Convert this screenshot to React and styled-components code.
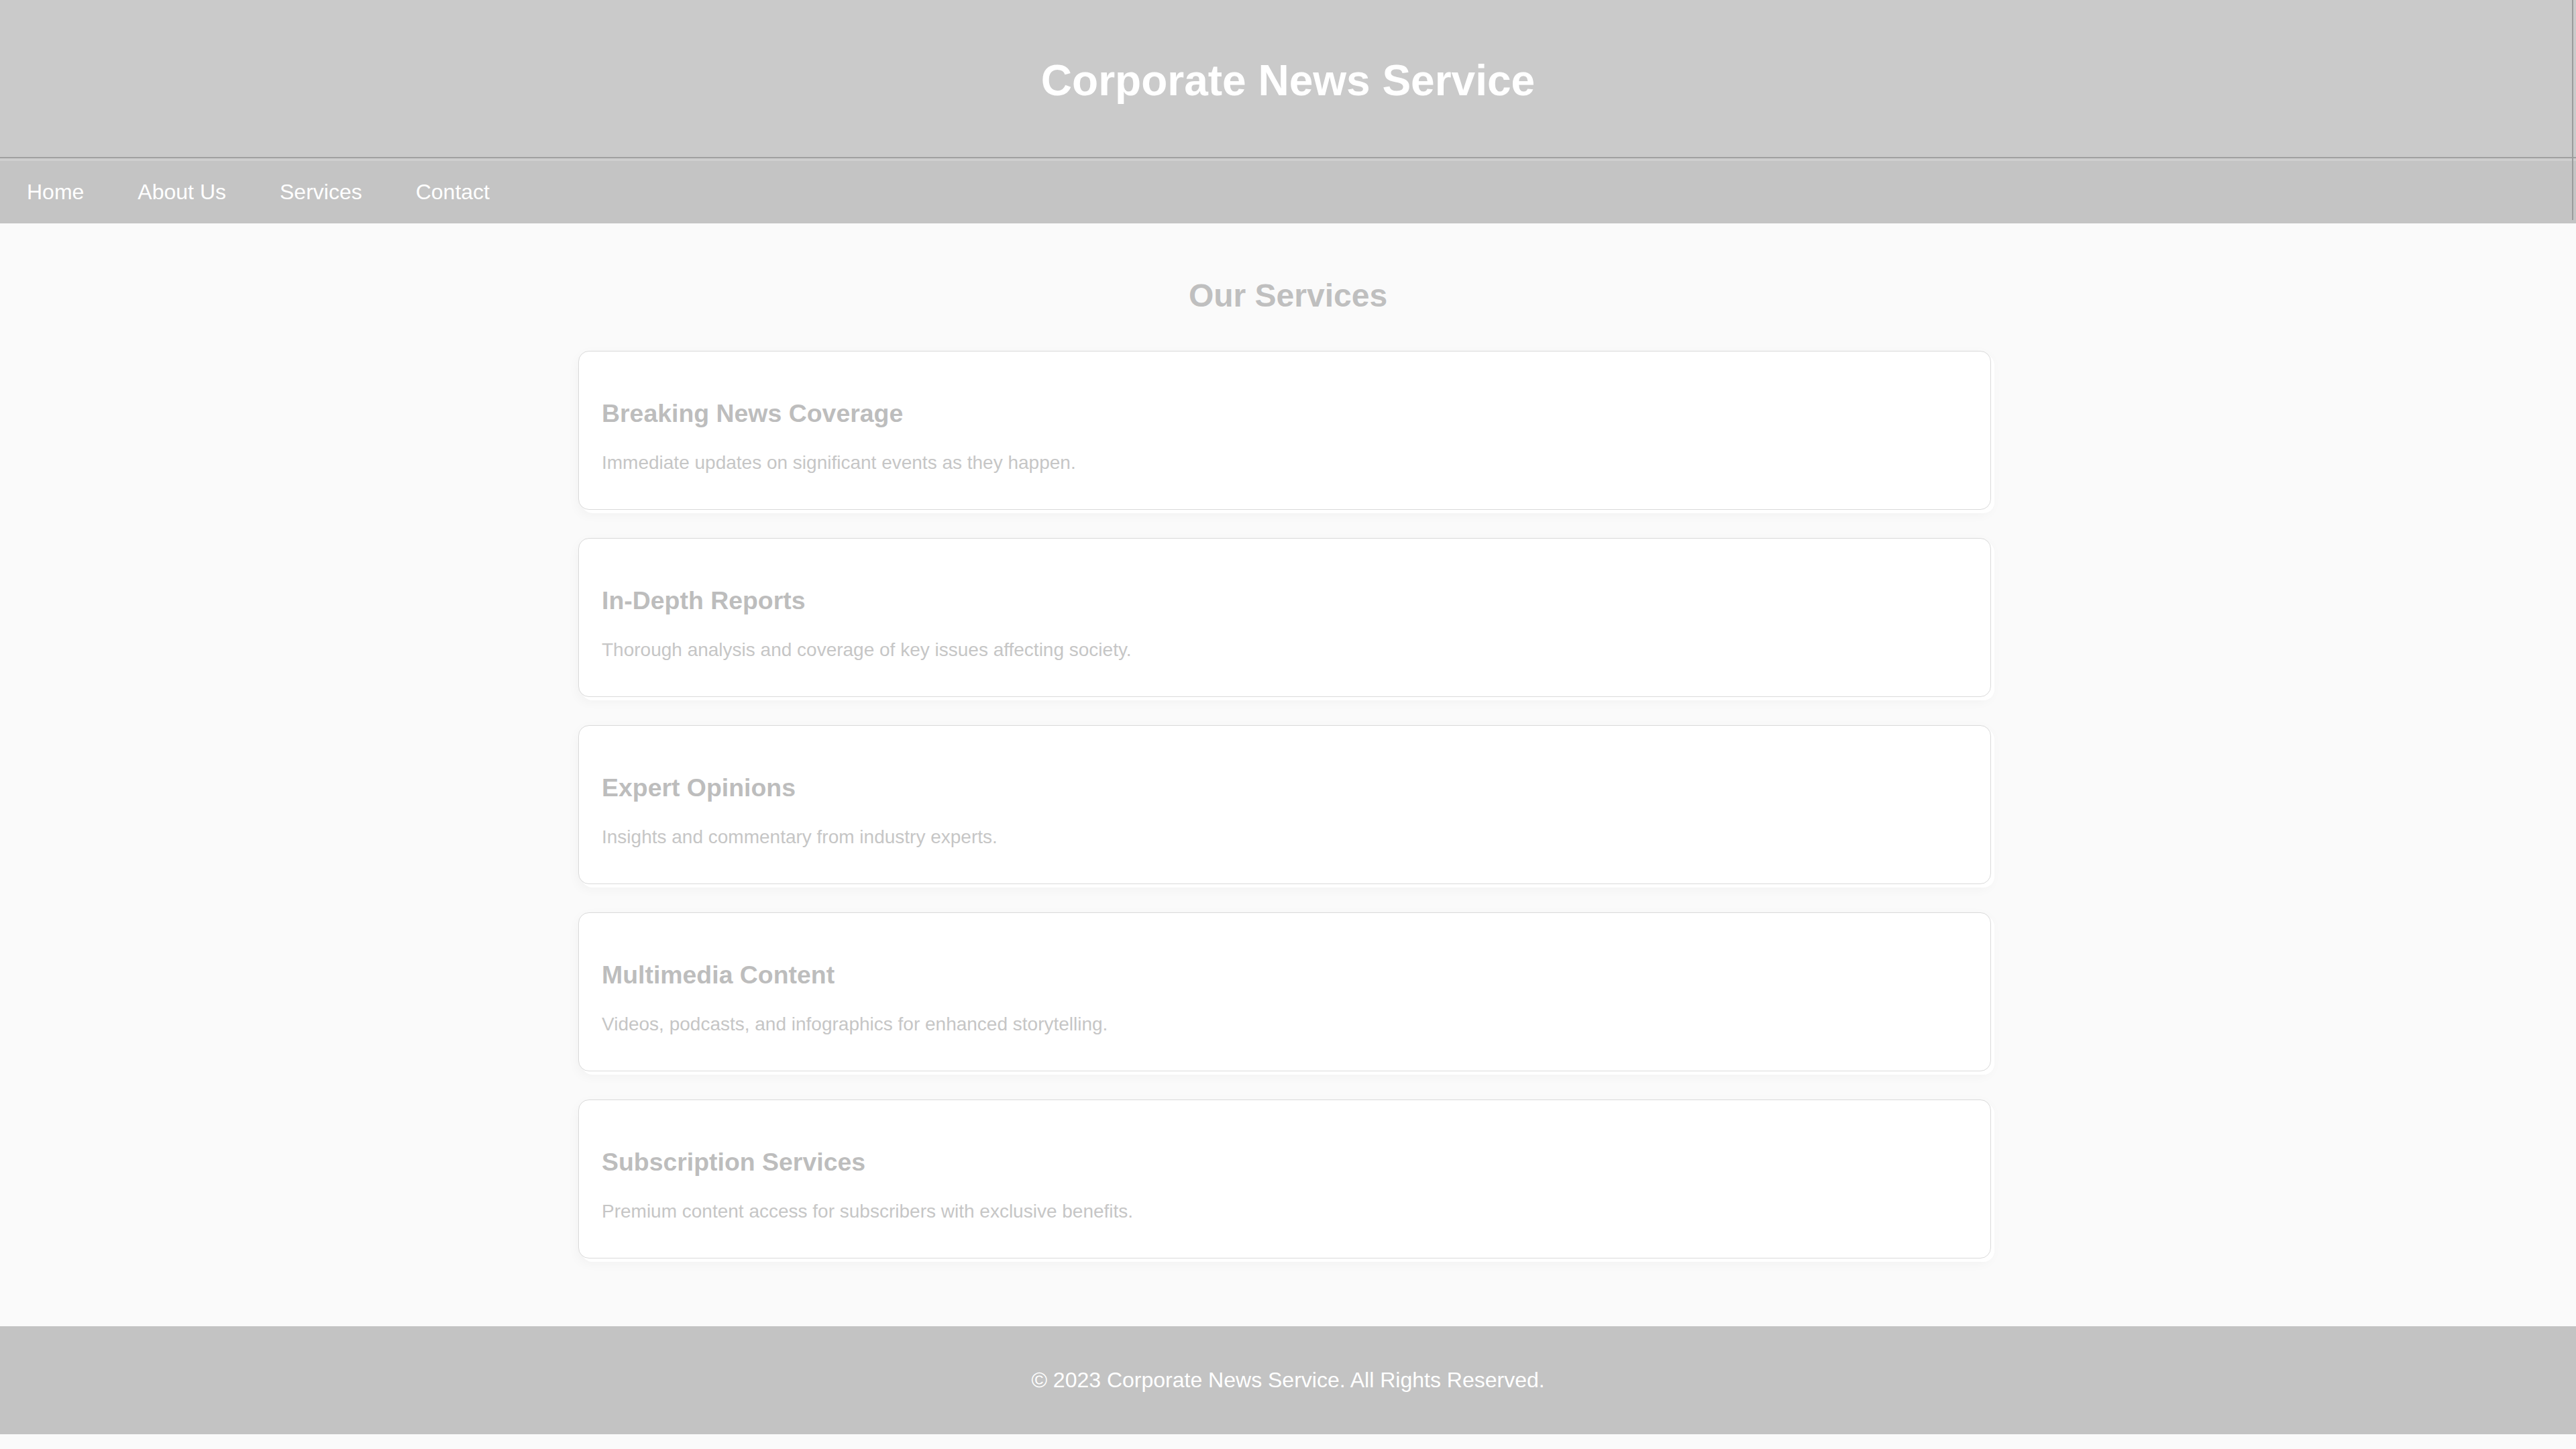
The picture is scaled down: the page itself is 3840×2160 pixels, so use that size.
import React from "react";
import styled, { createGlobalStyle } from "styled-components";

const GlobalStyle = createGlobalStyle`
  html, body {
    margin: 0;
    padding: 0;
    background-color: #fafafa;
    font-family: "Liberation Sans", Arial, sans-serif;
  }
`;

const TopBand = styled.div`
  position: relative;
  /* thin edge line on the right of header + nav */
  &::after {
    content: "";
    position: absolute;
    top: 0;
    right: 4px;
    width: 2px;
    height: 328px;
    background-color: #9c9c9c;
  }
`;

const Header = styled.header`
  background-color: #cacaca;
  padding: 83px 0 77px;
  border-bottom: 2px solid #a0a0a0;
  box-shadow: 0 4px 0 #cecece;
  margin-bottom: 4px;
  text-align: center;
`;

const Title = styled.h1`
  margin: 0;
  font-size: 64px;
  line-height: 74px;
  font-weight: bold;
  color: #fff;
`;

const Nav = styled.nav`
  background-color: #c4c4c4;
  display: flex;
  padding: 28px 0;
`;

const NavLink = styled.a`
  color: #fff;
  font-size: 32px;
  line-height: 37px;
  text-decoration: none;
  padding: 0 40px;
`;

const Main = styled.main`
  padding: 80px 10px 101px 0;
`;

const Heading2 = styled.h2`
  margin: 0 0 55px;
  text-align: center;
  font-size: 48px;
  line-height: 55px;
  color: #bfbfbf;
  padding-left: 10px;
`;

const CardList = styled.div`
  width: 2106px;
  margin: 0 auto;
  display: flex;
  flex-direction: column;
  gap: 42px;
`;

const Card = styled.div`
  background-color: #fff;
  border: 1px solid #dadada;
  border-radius: 16px;
  padding: 69px 34px 53px;
  box-shadow: 5px 5px 0 #fff, 0 6px 18px rgba(0, 0, 0, 0.045);
`;

const CardTitle = styled.h3`
  margin: 0 0 35px;
  font-size: 37.44px;
  line-height: 46px;
  font-weight: bold;
  color: #bdbdbd;
`;

const CardText = styled.p`
  margin: 0;
  font-size: 28px;
  line-height: 32px;
  color: #c6c6c6;
`;

const Footer = styled.footer`
  background-color: #c3c3c3;
  padding: 62px 0;
  text-align: center;
  color: #fff;
  font-size: 32px;
  line-height: 37px;
`;

const services = [
  {
    title: "Breaking News Coverage",
    text: "Immediate updates on significant events as they happen.",
  },
  {
    title: "In-Depth Reports",
    text: "Thorough analysis and coverage of key issues affecting society.",
  },
  {
    title: "Expert Opinions",
    text: "Insights and commentary from industry experts.",
  },
  {
    title: "Multimedia Content",
    text: "Videos, podcasts, and infographics for enhanced storytelling.",
  },
  {
    title: "Subscription Services",
    text: "Premium content access for subscribers with exclusive benefits.",
  },
];

export default function App() {
  return (
    <>
      <GlobalStyle />
      <TopBand>
        <Header>
          <Title>Corporate News Service</Title>
        </Header>
        <Nav>
          <NavLink href="#">Home</NavLink>
          <NavLink href="#">About Us</NavLink>
          <NavLink href="#">Services</NavLink>
          <NavLink href="#">Contact</NavLink>
        </Nav>
      </TopBand>
      <Main>
        <Heading2>Our Services</Heading2>
        <CardList>
          {services.map((s) => (
            <Card key={s.title}>
              <CardTitle>{s.title}</CardTitle>
              <CardText>{s.text}</CardText>
            </Card>
          ))}
        </CardList>
      </Main>
      <Footer>© 2023 Corporate News Service. All Rights Reserved.</Footer>
    </>
  );
}
